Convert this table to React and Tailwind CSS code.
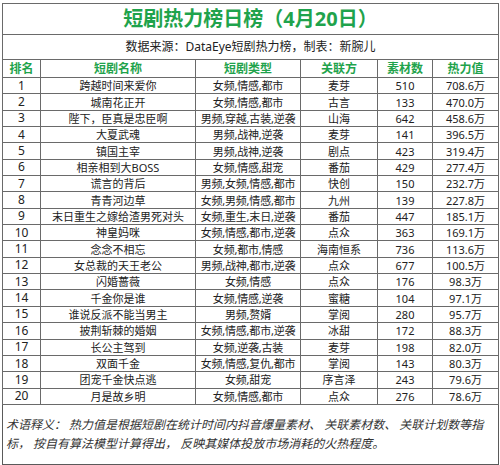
const rows = [
  [1, "跨越时间来爱你", "女频,情感,都市", "麦芽", 510, "708.6万"],
  [2, "城南花正开", "女频,情感,都市", "古言", 133, "470.0万"],
  [3, "陛下，臣真是忠臣啊", "男频,穿越,古装,逆袭", "山海", 642, "458.6万"],
  [4, "大夏武魂", "男频,战神,逆袭", "麦芽", 141, "396.5万"],
  [5, "镇国主宰", "男频,战神,逆袭", "剧点", 423, "319.4万"],
  [6, "相亲相到大BOSS", "女频,情感,甜宠", "番茄", 429, "277.4万"],
  [7, "谎言的背后", "男频,女频,情感,都市", "快创", 150, "232.7万"],
  [8, "青青河边草", "女频,男频,情感,都市", "九州", 139, "227.8万"],
  [9, "末日重生之嫁给渣男死对头", "女频,重生,末日,逆袭", "番茄", 447, "185.1万"],
  [10, "神皇妈咪", "女频,情感,都市,逆袭", "点众", 363, "169.1万"],
  [11, "念念不相忘", "女频,都市,情感", "海南恒系", 736, "113.6万"],
  [12, "女总裁的天王老公", "男频,战神,都市,逆袭", "点众", 677, "100.5万"],
  [13, "闪婚蔷薇", "女频,情感", "点众", 176, "98.3万"],
  [14, "千金你是谁", "女频,情感,逆袭", "蜜糖", 104, "97.1万"],
  [15, "谁说反派不能当男主", "男频,赘婿", "掌阅", 280, "95.7万"],
  [16, "披荆斩棘的婚姻", "女频,情感,都市,逆袭", "冰甜", 172, "88.3万"],
  [17, "长公主驾到", "女频,逆袭,古装", "麦芽", 198, "82.0万"],
  [18, "双面千金", "女频,情感,复仇,都市", "掌阅", 143, "80.3万"],
  [19, "团宠千金快点逃", "女频,甜宠", "序言泽", 243, "79.6万"],
  [20, "月是故乡明", "女频,情感,都市", "点众", 276, "78.6万"],
];

const headers = ["排名", "短剧名称", "短剧类型", "关联方", "素材数", "热力值"];

export default function App() {
  return (
    <div
      className="w-[500px] h-[465px] bg-white pt-[3px] pl-[2px] text-[#222]"
      style={{ fontFamily: '"Noto Sans", "Noto Sans CJK SC", sans-serif' }}
    >
      <table className="w-[496px] table-fixed border-collapse border border-[#5a5a5a] text-center">
        <colgroup>
          <col className="w-[38px]" />
          <col className="w-[155px]" />
          <col className="w-[105px]" />
          <col className="w-[77px]" />
          <col className="w-[55px]" />
          <col className="w-[66px]" />
        </colgroup>
        <tbody>
          {/* Title */}
          <tr className="h-[31px]">
            <td
              colSpan={6}
              className="border border-[#6a6a6a] text-[20px] font-bold text-[#1fa34c] leading-none"
            >
              短剧热力榜日榜（4月20日）
            </td>
          </tr>
          <tr className="h-[25px]">
            <td colSpan={6} className="border border-[#6a6a6a] text-[12px] leading-none">
              数据来源：DataEye短剧热力榜，制表：新腕儿
            </td>
          </tr>

          {/* Header */}
          <tr className="h-[18px]">
            {headers.map((h) => (
              <td
                key={h}
                className="border border-[#6a6a6a] text-[12px] font-bold text-[#1fa34c] leading-none p-0"
              >
                {h}
              </td>
            ))}
          </tr>

          {rows.map((r) => (
            <tr key={r[0]} className="h-[16.35px]">
              <td className="border border-[#6a6a6a] text-[12px] leading-none p-0">{r[0]}</td>
              <td className="border border-[#6a6a6a] text-[11px] leading-none p-0 whitespace-nowrap">{r[1]}</td>
              <td className="border border-[#6a6a6a] text-[11px] leading-none p-0 whitespace-nowrap tracking-[-0.2px]">{r[2]}</td>
              <td className="border border-[#6a6a6a] text-[11px] leading-none p-0">{r[3]}</td>
              <td className="border border-[#6a6a6a] text-[11px] leading-none p-0">{r[4]}</td>
              <td className="border border-[#6a6a6a] text-[11px] leading-none p-0">{r[5]}</td>
            </tr>
          ))}

          {/* Footnote */}
          <tr className="h-[60px]">
            <td
              colSpan={6}
              className="border border-[#5a5a5a] text-left align-top pt-[10px] pl-[3px] pr-2 text-[12px] leading-[19px] italic text-[#333]"
            >
              术语释义： 热力值是根据短剧在统计时间内抖音爆量素材、 关联素材数、 关联计划数等指标， 按自有算法模型计算得出， 反映其媒体投放市场消耗的火热程度。
            </td>
          </tr>
        </tbody>
      </table>
    </div>
  );
}
